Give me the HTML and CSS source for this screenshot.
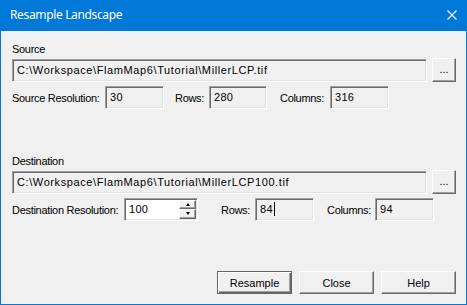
FILE: index.html
```html
<!DOCTYPE html>
<html lang="en">
<head>
    <meta charset="UTF-8">
    <title>Resample Landscape</title>
    <link rel="stylesheet" href="styles.css">
</head>
<body>
    <div class="window">
        <div class="titlebar">
            <span class="title">Resample Landscape</span>
            <svg class="close-x" width="10" height="10" viewBox="0 0 10 10">
                <path d="M0.5 0.5 L9.5 9.5 M9.5 0.5 L0.5 9.5" stroke="#fff" stroke-width="1.1" fill="none"/>
            </svg>
        </div>

        <div class="content">
            <div class="section">
                <div class="group-label">Source</div>
                <div class="path-row">
                    <div class="field path">C:\Workspace\FlamMap6\Tutorial\MillerLCP.tif</div>
                    <div class="btn browse">...</div>
                </div>
                <div class="info-row">
                    <span class="lbl w-src-res">Source Resolution:</span>
                    <div class="field box">30</div>
                    <span class="lbl w-rows ml-11">Rows:</span>
                    <div class="field box w58">280</div>
                    <span class="lbl w-cols ml-13">Columns:</span>
                    <div class="field box">316</div>
                </div>
            </div>

            <div class="section dest">
                <div class="group-label">Destination</div>
                <div class="path-row">
                    <div class="field path">C:\Workspace\FlamMap6\Tutorial\MillerLCP100.tif</div>
                    <div class="btn browse">...</div>
                </div>
                <div class="info-row">
                    <span class="lbl w-dst-res">Destination Resolution:</span>
                    <div class="field spin-field">
                        <span class="spin-text">100</span>
                        <div class="spinner">
                            <div class="spin-btn"><span class="arrow up"></span></div>
                            <div class="spin-btn"><span class="arrow down"></span></div>
                        </div>
                    </div>
                    <span class="lbl w-rows ml-23">Rows:</span>
                    <div class="field box">84<span class="caret"></span></div>
                    <span class="lbl w-cols2 ml-13">Columns:</span>
                    <div class="field box">94</div>
                </div>
            </div>

            <div class="actions">
                <div class="btn action default">Resample</div>
                <div class="btn action">Close</div>
                <div class="btn action">Help</div>
            </div>
        </div>
    </div>
</body>
</html>
```

FILE: styles.css
```css
* {
    margin: 0;
    padding: 0;
    box-sizing: border-box;
}

body {
    font-family: 'Liberation Sans', Arial, sans-serif;
    font-size: 11px;
    color: #000;
    background: #f0f0f0;
}

.window {
    width: 467px;
    height: 305px;
    border: 1px solid #0078d7;
    border-top: none;
    background: #f0f0f0;
    display: flex;
    flex-direction: column;
}

.titlebar {
    height: 31px;
    background: #0078d7;
    color: #fff;
    display: flex;
    align-items: center;
    justify-content: space-between;
    padding: 0 9px 1px 9px;
}

.title {
    font-family: 'Noto Sans', 'Open Sans', sans-serif;
    font-size: 12px;
    letter-spacing: -0.35px;
    line-height: 16px;
}

.close-x {
    display: block;
}

.content {
    flex: 1;
    padding: 12px 10px 0 11px;
    display: flex;
    flex-direction: column;
}

.section.dest {
    margin-top: 46px;
}

.group-label {
    line-height: 13px;
    letter-spacing: -0.3px;
}

.path-row {
    display: flex;
    align-items: center;
    gap: 5px;
    margin-top: 2px;
}

/* sunken 3d edit box */
.field {
    height: 23px;
    border-top: 1px solid #a0a0a0;
    border-left: 1px solid #a0a0a0;
    border-right: 1px solid #fff;
    border-bottom: 1px solid #fff;
    box-shadow: inset 1px 1px 0 #696969, inset -1px -1px 0 #e3e3e3;
    background: #f0f0f0;
    padding: 0 3px 1px 4px;
    display: flex;
    align-items: center;
    white-space: nowrap;
    overflow: hidden;
}

.path {
    flex: 1;
    letter-spacing: 0.6px;
}

.info-row {
    display: flex;
    align-items: center;
    margin-top: 4px;
}

.lbl {
    white-space: nowrap;
    letter-spacing: -0.3px;
}

.w-src-res { width: 93px; }
.w-dst-res { width: 112px; }
.w-rows { width: 34px; }
.w-cols { width: 50px; }
.w-cols2 { width: 48px; }
.ml-11 { margin-left: 11px; }
.ml-13 { margin-left: 13px; }
.ml-23 { margin-left: 23px; }

.box {
    width: 59px;
    letter-spacing: 0.3px;
}

.box.w58 {
    width: 58px;
}

.caret {
    display: inline-block;
    width: 1px;
    height: 14px;
    background: #000;
    margin-left: 1px;
}

.spin-field {
    width: 74px;
    background: #fff;
    padding-right: 1px;
    letter-spacing: 0.3px;
}

.spin-text {
    flex: 1;
}

.spinner {
    display: flex;
    flex-direction: column;
    width: 17px;
    height: 19px;
}

.spin-btn {
    flex: 1;
    background: #f0f0f0;
    border-top: 1px solid #fff;
    border-left: 1px solid #fff;
    border-right: 1px solid #696969;
    border-bottom: 1px solid #696969;
    box-shadow: inset -1px -1px 0 #a0a0a0;
    display: flex;
    align-items: center;
    justify-content: center;
}

.arrow {
    width: 0;
    height: 0;
    border-left: 2.5px solid transparent;
    border-right: 2.5px solid transparent;
}

.arrow.up {
    border-bottom: 3px solid #000;
}

.arrow.down {
    border-top: 3px solid #000;
}

/* raised 3d button */
.btn {
    background: #f0f0f0;
    border-top: 1px solid #fff;
    border-left: 1px solid #fff;
    border-right: 1px solid #696969;
    border-bottom: 1px solid #696969;
    box-shadow: inset -1px -1px 0 #a0a0a0;
    display: flex;
    align-items: center;
    justify-content: center;
    white-space: nowrap;
}

.browse {
    width: 24px;
    height: 24px;
    padding-bottom: 2px;
}

.actions {
    display: flex;
    justify-content: flex-end;
    gap: 7px;
    margin-top: 50px;
}

.action {
    width: 75px;
    height: 23px;
}

.action.default {
    border: 1px solid #646464;
    box-shadow: inset 1px 1px 0 #fff, inset -1px -1px 0 #696969, inset -2px -2px 0 #a0a0a0;
}
```
